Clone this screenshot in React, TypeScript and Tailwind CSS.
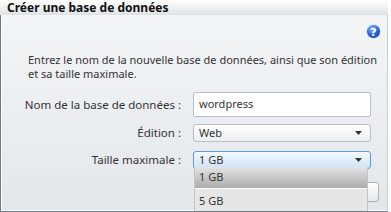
import React from "react";

const font = { fontFamily: '"Noto Sans", "DejaVu Sans", sans-serif' };

function HelpIcon() {
  return (
    <svg width="15" height="15" viewBox="0 0 15 15">
      <defs>
        <radialGradient id="hg" cx="40%" cy="30%" r="70%">
          <stop offset="0%" stopColor="#8fb8f5" />
          <stop offset="60%" stopColor="#2c66d3" />
          <stop offset="100%" stopColor="#1b47a8" />
        </radialGradient>
      </defs>
      <circle cx="7.5" cy="7.5" r="7" fill="url(#hg)" stroke="#ffffff" strokeWidth="0.8" />
      <text x="7.5" y="11.6" textAnchor="middle" fontSize="11" fontWeight="bold" fill="#ffffff" fontFamily="DejaVu Sans, sans-serif">?</text>
    </svg>
  );
}

function Arrow() {
  return (
    <svg width="7" height="4" viewBox="0 0 7 4">
      <path d="M0 0 L7 0 L3.5 4 Z" fill="#333" />
    </svg>
  );
}

export default function App() {
  return (
    <div className="w-[391px] h-[212px] overflow-hidden bg-white relative text-[#333]" style={font}>
      <div className="w-[388px] h-[212px] flex flex-col">
        <div className="h-[15px] bg-gradient-to-b from-[#ffffff] to-[#dfe2e5] flex items-center pl-[7px] text-[12px] font-bold text-[#111] leading-[15px] whitespace-nowrap">
          Créer une base de données
        </div>
        <div className="flex-1 border-l border-l-[#6f7c88] border-r border-r-[#c9ced3] border-b border-b-[#6f7c88] bg-gradient-to-b from-[#f3f5f7] to-[#e4e7ea] flex flex-col relative">
          <div className="border-l border-white border-b border-b-white flex-1 flex flex-col">
            <div className="flex justify-end pr-[6px] pt-[9px]">
              <HelpIcon />
            </div>
            <div className="pl-[26px] mt-[14px] text-[11px] leading-[14px] whitespace-nowrap">
              Entrez le nom de la nouvelle base de données, ainsi que son édition
              <br />
              et sa taille maximale.
            </div>
            <div className="flex items-center mt-[11px] text-[11.5px] whitespace-nowrap">
              <div className="w-[179px] text-right">Nom de la base de données :</div>
              <div className="ml-[12px] w-[178px] h-[25px] bg-white border border-[#b9bfc5] rounded-[2px] flex items-center pl-[5px] text-[11px]">
                wordpress
              </div>
            </div>
            <div className="flex items-center mt-[7px] text-[11.5px] whitespace-nowrap">
              <div className="w-[179px] text-right">Édition :</div>
              <div className="ml-[12px] w-[178px] h-[18px] bg-gradient-to-b from-[#ffffff] to-[#eceef0] border border-[#b9bfc5] rounded-[3px] flex items-center justify-between pl-[5px] pr-[8px] text-[11px]">
                <span>Web</span>
                <Arrow />
              </div>
            </div>
            <div className="flex items-center mt-[9px] text-[11.5px] whitespace-nowrap">
              <div className="w-[179px] text-right">Taille maximale :</div>
              <div className="ml-[12px] w-[178px] h-[18px] bg-gradient-to-b from-[#f4f9fe] to-[#cfe3f5] border border-[#5d9ad2] rounded-[3px] flex items-center justify-between pl-[5px] pr-[8px] text-[11px]">
                <span>1 GB</span>
                <Arrow />
              </div>
            </div>
            <div className="flex justify-end pr-[8px] mt-[13px]">
              <div className="w-[80px] h-[20px] bg-gradient-to-b from-[#ffffff] to-[#e6e8ea] border border-[#aab0b6] rounded-[3px]" />
            </div>
          </div>
          <div className="absolute left-[193px] top-[152px] w-[174px] bg-[#e8e8e8] border-x border-[#c4c4c4] text-[11px] flex flex-col">
            <div className="h-[22px] bg-gradient-to-b from-[#e4e4e4] to-[#acacac] flex items-center pl-[4px] border-b border-white">1 GB</div>
            <div className="h-[22px] bg-[#e6e6e6] flex items-center pl-[4px] pt-[2px]">5 GB</div>
          </div>
        </div>
      </div>
    </div>
  );
}
